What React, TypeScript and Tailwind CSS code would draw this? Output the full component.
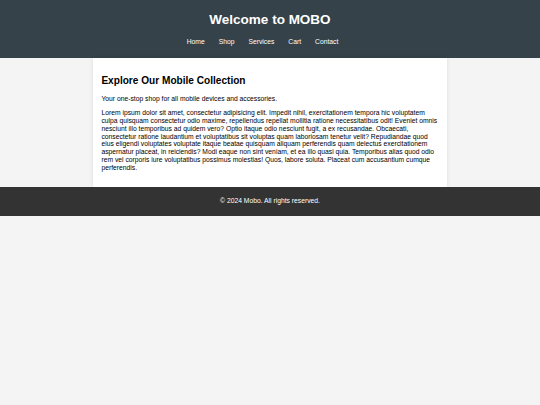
const navItems = ["Home", "Shop", "Services", "Cart", "Contact"];

const App = () => {
  return (
    <div className="min-h-[405px] bg-[#f4f4f4] font-['Liberation_Sans',Arial,sans-serif] text-[6.75px] leading-[1.15] text-black">
      <header className="bg-[#35424a] pt-[12.3px] pb-[12.6px] text-center text-white">
        <h1 className="text-[13.5px] font-bold leading-[15.5px]">Welcome to MOBO</h1>
        <nav className="mt-[9.9px]">
          <ul className="flex justify-center gap-[14px] pr-[15px] leading-[7.8px]">
            {navItems.map((item) => (
              <li key={item}>
                <a href="#" className="text-white">
                  {item}
                </a>
              </li>
            ))}
          </ul>
        </nav>
      </header>

      <main className="mx-auto w-[354px] bg-white p-[8.4px] shadow-[0_0_4px_rgba(0,0,0,0.1)]">
        <h2 className="my-[8.4px] text-[10.1px] font-bold leading-[11.6px]">
          Explore Our Mobile Collection
        </h2>
        <p className="my-[6.75px] leading-[7.76px]">
          Your one-stop shop for all mobile devices and accessories.
        </p>
        <p className="my-[6.75px] leading-[7.76px]">
          Lorem ipsum dolor sit amet, consectetur adipisicing elit. Impedit nihil, exercitationem tempora hic
          voluptatem culpa quisquam consectetur odio maxime, repellendus repellat mollitia ratione necessitatibus
          odit! Eveniet omnis nesciunt illo temporibus ad quidem vero? Optio itaque odio nesciunt fugit, a ex
          recusandae. Obcaecati, consectetur ratione laudantium et voluptatibus sit voluptas quam laboriosam tenetur
          velit? Repudiandae quod eius eligendi voluptates voluptate itaque beatae quisquam aliquam perferendis quam
          delectus exercitationem aspernatur placeat, in reiciendis? Modi eaque non sint veniam, et ea illo quasi
          quia. Temporibus alias quod odio rem vel corporis iure voluptatibus possimus molestias! Quos, labore
          soluta. Placeat cum accusantium cumque perferendis.
        </p>
      </main>

      <footer className="bg-[#333] py-[10.6px] text-center leading-[7.8px] text-white">
        <p>&copy; 2024 Mobo. All rights reserved.</p>
      </footer>
    </div>
  );
};

export default App;
